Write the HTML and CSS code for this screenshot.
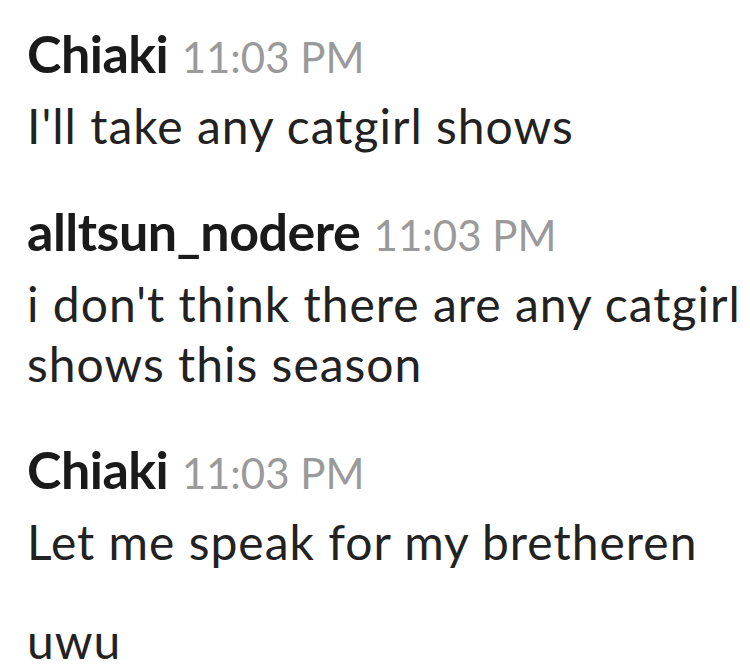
FILE: index.html
```html
<!DOCTYPE html>
<html>
<head>
<meta charset="utf-8">
<link rel="stylesheet" href="styles.css">
</head>
<body>
<div class="chat">
  <div class="msg-group">
    <div class="msg-header"><span class="author">Chiaki</span> <span class="time">11:03 PM</span></div>
    <p class="msg-text">I'll take any catgirl shows</p>
  </div>
  <div class="msg-group">
    <div class="msg-header"><span class="author">alltsun_nodere</span> <span class="time">11:03 PM</span></div>
    <p class="msg-text">i don't think there are any catgirl shows this season</p>
  </div>
  <div class="msg-group">
    <div class="msg-header"><span class="author">Chiaki</span> <span class="time">11:03 PM</span></div>
    <p class="msg-text">Let me speak for my bretheren</p>
    <p class="msg-text msg-follow">uwu</p>
  </div>
</div>
</body>
</html>
```
FILE: styles.css
```css
html, body {
  margin: 0;
  padding: 0;
  background: #ffffff;
}
body {
  font-family: Lato, "Open Sans", sans-serif;
  color: #1e1e1e;
}
.chat {
  padding: 21px 0 0 27px;
  display: flex;
  flex-direction: column;
  gap: 43px;
}
.msg-header {
  font-size: 52px;
  line-height: 64px;
  white-space: nowrap;
}
.author {
  font-weight: 700;
  color: #1a1a1a;
  letter-spacing: -0.5px;
}
.time {
  font-size: 42px;
  color: #9a9a9a;
}
.msg-text {
  margin: 7px 0 0 0;
  font-size: 48px;
  line-height: 60px;
  letter-spacing: 1px;
  color: #222222;
}
.msg-follow {
  margin-top: 39px;
}
```
